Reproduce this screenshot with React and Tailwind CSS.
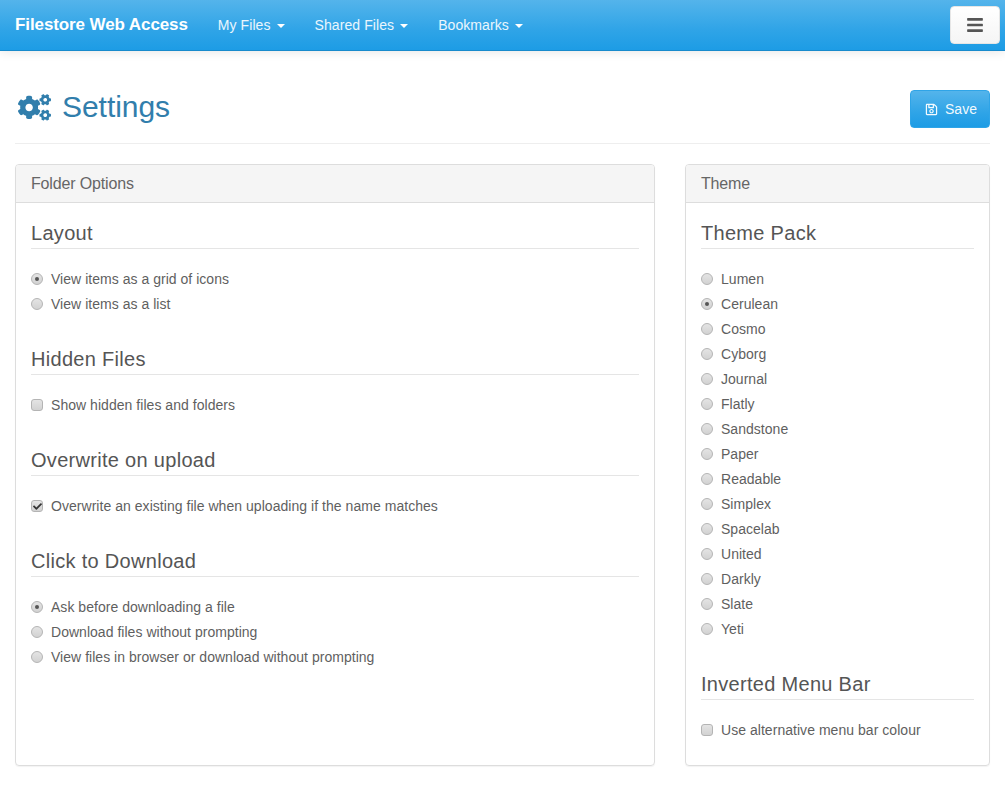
import React from "react";
import { FaBars, FaCogs, FaRegSave, FaCheck } from "react-icons/fa";

const themes = [
  "Lumen", "Cerulean", "Cosmo", "Cyborg", "Journal", "Flatly", "Sandstone", "Paper",
  "Readable", "Simplex", "Spacelab", "United", "Darkly", "Slate", "Yeti",
];

function NavItem({ label }) {
  return (
    <a className="flex items-center px-[15px] text-[14px] tracking-[0.08px] text-white/90">
      {label}
      <span className="ml-[6px] mt-[2px] h-0 w-0 border-x-4 border-t-4 border-x-transparent border-t-white" />
    </a>
  );
}

function Radio({ label, checked }) {
  return (
    <label className="flex h-[25px] items-center tracking-[0.03px]">
      <span className="mb-[1px] mr-[8px] flex h-[12px] w-[12px] items-center justify-center rounded-full border border-[#b4b4b4] bg-gradient-to-b from-[#e4e4e4] to-[#d2d2d2]">
        {checked && <span className="h-[4px] w-[4px] rounded-full bg-[#555]" />}
      </span>
      {label}
    </label>
  );
}

function Check({ label, checked }) {
  return (
    <label className="flex h-[25px] items-center tracking-[0.04px]">
      <span className="mb-[1px] mr-[8px] flex h-[12px] w-[12px] items-center justify-center rounded-[3px] border border-[#b4b4b4] bg-gradient-to-b from-[#e4e4e4] to-[#d2d2d2]">
        {checked && <FaCheck className="text-[9px] text-[#333]" />}
      </span>
      {label}
    </label>
  );
}

function Section({ title, children }) {
  return (
    <div className="mb-[31px] last:mb-[22px]">
      <h3 className="mb-[18px] border-b border-[#e5e5e5] pb-[4px] text-[20px] leading-[22px] tracking-[0.3px] text-[#555]">{title}</h3>
      {children}
    </div>
  );
}

function Panel({ title, children }) {
  return (
    <div className="rounded border border-[#ddd] shadow-[0_1px_1px_rgba(0,0,0,0.05)]">
      <div className="h-[38px] rounded-t-[3px] border-b border-[#ddd] bg-[#f5f5f5] px-[15px] text-[16px] leading-[37px] tracking-[-0.15px] text-[#666]">
        {title}
      </div>
      <div className="px-[15px] pt-[19px]">{children}</div>
    </div>
  );
}

export default function App() {
  return (
    <div className="h-[789px] overflow-hidden bg-white font-['Liberation_Sans',Arial,sans-serif] text-[14px] text-[#5f5f5f]">
      <nav className="flex h-[51px] items-stretch border-b border-[#178acc] bg-[linear-gradient(#54b4eb,#2fa4e7_60%,#1d9ce5)] shadow-[0_1px_10px_rgba(0,0,0,0.1)]">
        <a className="flex items-center px-[15px] text-[17px] font-bold tracking-[-0.1px] text-white">Filestore Web Access</a>
        <NavItem label="My Files" />
        <NavItem label="Shared Files" />
        <NavItem label="Bookmarks" />
        <button className="mb-[6px] ml-auto mr-[5px] mt-[6px] flex w-[50px] items-center justify-center rounded border border-[#e6e6e6] bg-gradient-to-b from-white to-[#f5f5f5] text-[18px] text-[#555]">
          <FaBars />
        </button>
      </nav>
      <main className="px-[15px]">
        <div className="mt-[39px] flex items-start justify-between border-b border-[#eee] pb-[15px]">
          <h1 className="flex items-center text-[30px] leading-[34px] tracking-[-0.05px] text-[#317eac]">
            <FaCogs className="ml-[3px] mr-[11px] text-[33px]" />
            Settings
          </h1>
          <button className="flex h-[38px] w-[80px] items-center justify-center rounded border border-[#2fa4e7] bg-[linear-gradient(#54b4eb,#2fa4e7_60%,#1d9ce5)] pl-[2px] text-[14px] text-white/95">
            <FaRegSave className="mr-[7px] text-[13px]" />
            Save
          </button>
        </div>
        <div className="mt-[20px] grid grid-cols-[640px_305px] gap-[30px]">
          <Panel title="Folder Options">
            <Section title="Layout">
              <Radio label="View items as a grid of icons" checked />
              <Radio label="View items as a list" />
            </Section>
            <Section title="Hidden Files">
              <Check label="Show hidden files and folders" />
            </Section>
            <Section title="Overwrite on upload">
              <Check label="Overwrite an existing file when uploading if the name matches" checked />
            </Section>
            <Section title="Click to Download">
              <Radio label="Ask before downloading a file" checked />
              <Radio label="Download files without prompting" />
              <Radio label="View files in browser or download without prompting" />
            </Section>
          </Panel>
          <Panel title="Theme">
            <Section title="Theme Pack">
              {themes.map((t) => (
                <Radio key={t} label={t} checked={t === "Cerulean"} />
              ))}
            </Section>
            <Section title="Inverted Menu Bar">
              <Check label="Use alternative menu bar colour" />
            </Section>
          </Panel>
        </div>
      </main>
    </div>
  );
}
